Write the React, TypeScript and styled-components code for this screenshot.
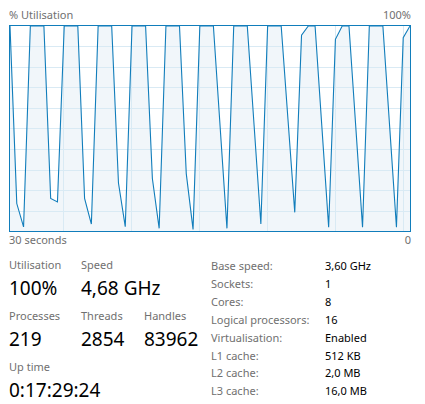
import React from "react";
import styled, { createGlobalStyle } from "styled-components";

const GlobalStyle = createGlobalStyle`
  html, body { margin: 0; padding: 0; background: #ffffff; }
  body { font-family: "Noto Sans", "Open Sans", sans-serif; }
`;

const Page = styled.div`
  width: 425px;
  height: 404px;
  box-sizing: border-box;
  padding: 7px 14px 0 9px;
  display: flex;
  flex-direction: column;
  overflow: hidden;
`;

const CaptionRow = styled.div`
  display: flex;
  justify-content: space-between;
  font-size: 11px;
  line-height: 16px;
  color: #707070;
`;

const GraphBox = styled.div`
  margin-top: 2px;
  width: 400px;
  height: 205px;
  border: 1px solid #117dbb;
  background: #ffffff;
`;

const Bottom = styled.div`
  display: flex;
  align-items: flex-start;
  margin-top: 9px;
`;

const LeftStats = styled.div`
  width: 202px;
  display: flex;
  flex-direction: column;
`;

const StatRow = styled.div`
  display: flex;
  margin-bottom: 8px;
`;

const StatItem = styled.div<{ $w?: number }>`
  width: ${(p) => (p.$w ? `${p.$w}px` : "auto")};
  display: flex;
  flex-direction: column;
  gap: 3px;
`;

const StatLabel = styled.div`
  font-size: 11px;
  line-height: 16px;
  color: #707070;
  white-space: nowrap;
`;

const StatValue = styled.div`
  font-size: 19px;
  line-height: 24px;
  color: #000000;
  white-space: nowrap;
`;

const InfoTable = styled.div`
  display: grid;
  grid-template-columns: 114px auto;
  align-content: start;
  font-size: 11px;
  line-height: 17.9px;
`;

const InfoKey = styled.div`
  color: #707070;
  white-space: nowrap;
`;

const InfoVal = styled.div`
  color: #000000;
  white-space: nowrap;
`;

const values = [
  100, 13.4, 2, 100, 100, 100, 15.9, 14.2, 100, 100, 100, 15.9, 3.4, 100, 100,
  100, 23.4, 2.1, 100, 100, 100, 25.6, 1.3, 100, 100, 100, 28, 0.8, 100, 100,
  100, 50.5, 1.3, 100, 100, 100, 51.7, 3.4, 100, 100, 100, 54.5, 9.1, 95.5, 100,
  100, 50.9, 1.8, 93.5, 100, 100, 50.9, 1.8, 100, 100, 100, 50.9, 1.8, 94.3, 100,
];

const W = 400;
const H = 205;

function Graph() {
  const pts = values.map((v, i) => {
    const x = (i * W) / (values.length - 1);
    const y = (1 - v / 100) * H;
    return [x, y] as const;
  });
  const line = pts.map(([x, y]) => `${x.toFixed(2)},${y.toFixed(2)}`).join(" ");
  const area = `M0,${H} L${line.split(" ").join(" L")} L${W},${H} Z`;
  const hLines = Array.from({ length: 9 }, (_, k) => 20 + k * 20.6);
  const vLines = Array.from({ length: 6 }, (_, k) => 53 + k * 68);
  return (
    <svg width={W} height={H} viewBox={`0 0 ${W} ${H}`} style={{ display: "block" }}>
      <path d={area} fill="#f1f6fa" />
      <g stroke="#d9eaf4" strokeWidth={1} shapeRendering="crispEdges">
        {hLines.map((y) => (
          <line key={`h${y}`} x1={0} x2={W} y1={Math.round(y) + 0.5} y2={Math.round(y) + 0.5} />
        ))}
        {vLines.map((x) => (
          <line key={`v${x}`} y1={0} y2={H} x1={x + 0.5} x2={x + 0.5} />
        ))}
      </g>
      <polyline points={line} fill="none" stroke="#117dbb" strokeWidth={1.1} strokeLinejoin="miter" />
    </svg>
  );
}

const info: [string, string][] = [
  ["Base speed:", "3,60 GHz"],
  ["Sockets:", "1"],
  ["Cores:", "8"],
  ["Logical processors:", "16"],
  ["Virtualisation:", "Enabled"],
  ["L1 cache:", "512 KB"],
  ["L2 cache:", "2,0 MB"],
  ["L3 cache:", "16,0 MB"],
];

export default function App() {
  return (
    <>
      <GlobalStyle />
      <Page>
        <CaptionRow>
          <span>% Utilisation</span>
          <span>100%</span>
        </CaptionRow>
        <GraphBox>
          <Graph />
        </GraphBox>
        <CaptionRow>
          <span>30 seconds</span>
          <span>0</span>
        </CaptionRow>
        <Bottom>
          <LeftStats>
            <StatRow>
              <StatItem $w={72}>
                <StatLabel>Utilisation</StatLabel>
                <StatValue>100%</StatValue>
              </StatItem>
              <StatItem>
                <StatLabel>Speed</StatLabel>
                <StatValue>4,68 GHz</StatValue>
              </StatItem>
            </StatRow>
            <StatRow>
              <StatItem $w={72}>
                <StatLabel>Processes</StatLabel>
                <StatValue>219</StatValue>
              </StatItem>
              <StatItem $w={63}>
                <StatLabel>Threads</StatLabel>
                <StatValue>2854</StatValue>
              </StatItem>
              <StatItem>
                <StatLabel>Handles</StatLabel>
                <StatValue>83962</StatValue>
              </StatItem>
            </StatRow>
            <StatRow>
              <StatItem>
                <StatLabel>Up time</StatLabel>
                <StatValue>0:17:29:24</StatValue>
              </StatItem>
            </StatRow>
          </LeftStats>
          <InfoTable>
            {info.map(([k, v]) => (
              <React.Fragment key={k}>
                <InfoKey>{k}</InfoKey>
                <InfoVal>{v}</InfoVal>
              </React.Fragment>
            ))}
          </InfoTable>
        </Bottom>
      </Page>
    </>
  );
}
